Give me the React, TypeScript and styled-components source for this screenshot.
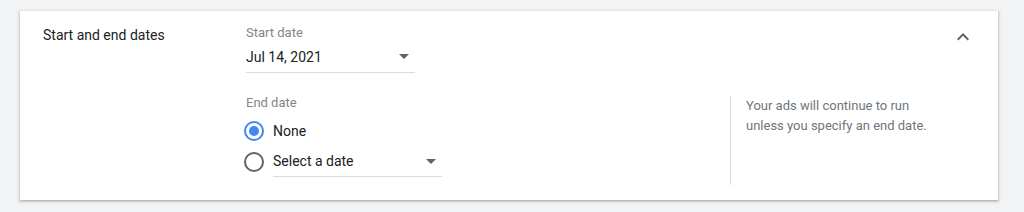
import React from 'react'
import styled, { createGlobalStyle } from 'styled-components'

const GlobalStyle = createGlobalStyle`
    html, body {
        margin: 0;
        padding: 0;
        background: #f1f3f4;
        font-family: Roboto, "Liberation Sans", Arial, sans-serif;
    }
`

const Page = styled.div`
    padding: 11px 26px 12px 20px;
`

const Card = styled.section`
    display: flex;
    align-items: flex-start;
    background: #fff;
    padding: 14px 23px 15px 23px;
    box-shadow: 0 1px 2px rgba(60, 64, 67, 0.3), 0 1px 3px 1px rgba(60, 64, 67, 0.15);
`

const Title = styled.div`
    flex: 0 0 203px;
    font-size: 14px;
    line-height: 20px;
    color: #202124;
`

const Body = styled.div`
    flex: 1;
    min-width: 0;
    display: flex;
    flex-direction: column;
`

const FieldLabel = styled.div`
    font-size: 13px;
    line-height: 16px;
    color: #80868b;
`

const Select = styled.div<{ width: number }>`
    display: flex;
    align-items: center;
    justify-content: space-between;
    width: ${p => p.width}px;
    height: 32px;
    padding-right: 6px;
    box-sizing: border-box;
    border-bottom: 1px solid #dadce0;
    font-size: 14px;
    color: #202124;
    cursor: pointer;
`

const Caret = styled.span`
    width: 0;
    height: 0;
    border-left: 5px solid transparent;
    border-right: 5px solid transparent;
    border-top: 5px solid #5f6368;
`

const EndRow = styled.div`
    display: flex;
    margin-top: 22px;
`

const EndField = styled.div`
    flex: 0 0 484px;
    padding-bottom: 8px;
`

const Options = styled.div`
    display: flex;
    flex-direction: column;
    margin-top: 5px;
`

const OptionRow = styled.div<{ tall?: boolean }>`
    display: flex;
    align-items: center;
    height: ${p => (p.tall ? 31 : 30)}px;
    gap: 9px;
    margin-left: -2px;
    font-size: 14px;
    color: #202124;
`

const Radio = styled.span<{ checked?: boolean }>`
    position: relative;
    flex: 0 0 auto;
    width: 20px;
    height: 20px;
    box-sizing: border-box;
    border-radius: 50%;
    border: 2px solid ${p => (p.checked ? '#4285f4' : '#5f6368')};

    &::after {
        content: '';
        display: ${p => (p.checked ? 'block' : 'none')};
        position: absolute;
        left: 3px;
        top: 3px;
        width: 10px;
        height: 10px;
        border-radius: 50%;
        background: #4285f4;
    }
`

const SelectWrap = styled.div`
    align-self: stretch;
    display: flex;

    & > div {
        height: auto;
    }
`

const Hint = styled.div`
    width: 220px;
    box-sizing: border-box;
    padding: 0 16px 0 15px;
    border-left: 1px solid #dadce0;
    font-size: 13px;
    line-height: 20px;
    color: #70757a;
    margin-top: 1px;
`

const Toggle = styled.button`
    flex: 0 0 auto;
    width: 24px;
    height: 24px;
    padding: 0;
    border: 0;
    background: none;
    cursor: pointer;
    color: #5f6368;
`

const ChevronUp: React.FC = () => (
    <svg width="24" height="24" viewBox="0 0 24 24" fill="currentColor">
        <path d="M12 8l-6 6 1.41 1.41L12 10.83l4.59 4.58L18 14z" />
    </svg>
)

const App: React.FC = () => {
    return (
        <Page>
            <GlobalStyle />
            <Card>
                <Title>Start and end dates</Title>
                <Body>
                    <FieldLabel>Start date</FieldLabel>
                    <Select width={169}>
                        <span>Jul 14, 2021</span>
                        <Caret />
                    </Select>
                    <EndRow>
                        <EndField>
                            <FieldLabel>End date</FieldLabel>
                            <Options>
                                <OptionRow>
                                    <Radio checked />
                                    <span>None</span>
                                </OptionRow>
                                <OptionRow tall>
                                    <Radio />
                                    <SelectWrap>
                                        <Select width={169}>
                                            <span>Select a date</span>
                                            <Caret />
                                        </Select>
                                    </SelectWrap>
                                </OptionRow>
                            </Options>
                        </EndField>
                        <Hint>Your ads will continue to run unless you specify an end date.</Hint>
                    </EndRow>
                </Body>
                <Toggle aria-label="Collapse">
                    <ChevronUp />
                </Toggle>
            </Card>
        </Page>
    )
}

export default App
